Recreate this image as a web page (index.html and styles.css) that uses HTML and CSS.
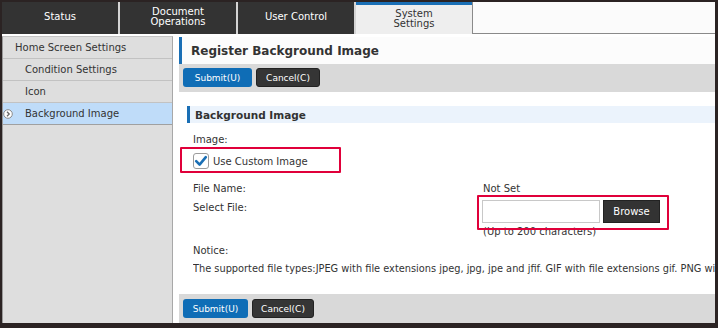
FILE: index.html
```html
<!DOCTYPE html>
<html lang="en">
<head>
    <meta charset="UTF-8">
    <title>Register Background Image</title>
    <link rel="stylesheet" href="styles.css">
</head>
<body>
<div class="frame">
    <div class="tabs">
        <div class="tab">Status</div>
        <div class="tab">Document<br>Operations</div>
        <div class="tab">User Control</div>
        <div class="tab active">System<br>Settings</div>
        <div class="tab-fill"></div>
    </div>

    <div class="main">
        <!-- Menu lateral -->
        <div class="sidebar">
            <div class="side-item top">Home Screen Settings</div>
            <div class="side-item">Condition Settings</div>
            <div class="side-item">Icon</div>
            <div class="side-item current">
                <svg class="side-icon" width="10" height="10" viewBox="0 0 10 10">
                    <circle cx="5" cy="5" r="4.3" fill="#fff" stroke="#8a8a8a" stroke-width="1"/>
                    <path d="M4 2.8 L6.2 5 L4 7.2" fill="none" stroke="#666" stroke-width="1.3"/>
                </svg>
                Background Image
            </div>
        </div>

        <div class="content">
            <div class="page-title">Register Background Image</div>
            <div class="toolbar">
                <button class="btn btn-submit top-submit">Submit(U)</button>
                <button class="btn btn-cancel top-cancel">Cancel(C)</button>
            </div>

            <div class="section-title">Background Image</div>

            <div class="form">
                <div class="line first">Image:</div>
                <label class="check-row mark mark-check">
                    <span class="checkbox">
                        <svg width="16" height="16" viewBox="0 0 16 16">
                            <path d="M3.2 8.2 L6.6 11.6 L12.8 4.2" fill="none" stroke="#1a6fb5" stroke-width="2.6" stroke-linecap="round" stroke-linejoin="round"/>
                        </svg>
                    </span>
                    Use Custom Image
                </label>

                <div class="file-grid">
                    <div class="line">File Name:</div>
                    <div class="line">Not Set</div>
                    <div class="line">Select File:</div>
                    <div>
                        <div class="file-input mark mark-file">
                            <input type="text" class="path">
                            <button class="browse">Browse</button>
                        </div>
                        <div class="hint">(Up to 200 characters)</div>
                    </div>
                </div>

                <div class="line notice-label">Notice:</div>
                <div class="line notice">The supported file types:JPEG with file extensions jpeg, jpg, jpe and jfif. GIF with file extensions gif. PNG with file extensions png.</div>
            </div>

            <div class="toolbar bottom">
                <button class="btn btn-submit">Submit(U)</button>
                <button class="btn btn-cancel">Cancel(C)</button>
            </div>
        </div>
    </div>
</div>
</body>
</html>
```

FILE: styles.css
```css
body {
    margin: 0;
    font-family: "DejaVu Sans", Verdana, sans-serif;
    font-size: 10px;
    color: #333;
    background: #fff;
}

.frame {
    width: 718px;
    height: 328px;
    box-sizing: border-box;
    border: solid #2b2323;
    border-width: 2px 3px 5px 2px;
    display: flex;
    flex-direction: column;
    overflow: hidden;
}

/* Pestañas */
.tabs {
    display: flex;
    height: 32px;
    flex-shrink: 0;
    background: #d4d4d4;
}

.tab {
    width: 116px;
    margin-right: 2px;
    background: #333;
    color: #fff;
    display: flex;
    align-items: center;
    justify-content: center;
    text-align: center;
    line-height: 10px;
    padding-bottom: 2px;
    box-sizing: border-box;
}

.tab.active {
    background: #eee;
    color: #333;
    border-top: 3px solid #1a6fb5;
    margin-right: 0;
}

.tab-fill {
    flex: 1;
    background: #fbfbfb;
    border-left: 1px solid #8a8a8a;
    border-bottom: 1px solid #8a8a8a;
}

.main {
    flex: 1;
    display: flex;
    min-height: 0;
}

/* Menu lateral */
.sidebar {
    width: 171px;
    box-sizing: border-box;
    margin-top: 2px;
    background: #dedede;
    border-top: 1px solid #c4c4c4;
    border-left: 1px solid #9a9a9a;
    border-right: 1px solid #a8a8a8;
}

.side-item {
    height: 21px;
    border-bottom: 1px solid #c2c2c2;
    padding-left: 22px;
    display: flex;
    align-items: center;
}

.side-item.top {
    padding-left: 12px;
}

.side-item.current {
    padding-left: 0;
    background: #bfdcf9;
    border-bottom-color: #a0a0a0;
}

.side-icon {
    margin-right: 12px;
}

.content {
    flex: 1;
    min-width: 0;
    display: flex;
    flex-direction: column;
    padding: 3px 0 0 6px;
    background: #fff;
}

.page-title {
    height: 27px;
    flex-shrink: 0;
    border-left: 3px solid #1a6fb5;
    background: #fcfcfc;
    font-weight: bold;
    font-size: 12px;
    padding-left: 9px;
    display: flex;
    align-items: center;
}

.toolbar {
    height: 28px;
    flex-shrink: 0;
    box-sizing: border-box;
    background: #d9d9d9;
    padding: 4px;
    display: flex;
    gap: 4px;
}

.toolbar.bottom {
    margin-top: auto;
    height: 29px;
    padding-top: 5px;
}

.btn {
    height: 19px;
    border-radius: 3px;
    color: #fff;
    font-family: inherit;
    font-size: 9px;
    padding: 0;
    border: none;
    cursor: pointer;
}

.btn-submit {
    background: #0f6db6;
    width: 65px;
}

.btn-cancel {
    background: #353535;
    border: 1px solid #222;
    width: 62px;
}

.top-submit {
    width: 69px;
}

.top-cancel {
    width: 64px;
}

.section-title {
    margin: 14px 0 0 8px;
    height: 17px;
    flex-shrink: 0;
    border-left: 3px solid #1a6fb5;
    background: #ebf3fc;
    font-size: 10.5px;
    font-weight: bold;
    padding-left: 5px;
    display: flex;
    align-items: center;
}

.form {
    padding-left: 14px;
}

.line {
    line-height: 18px;
    white-space: nowrap;
}

.line.first {
    margin-top: 8px;
}

.check-row {
    margin-top: 3px;
    height: 18px;
    display: inline-flex;
    align-items: center;
    gap: 4px;
}

.checkbox {
    width: 16px;
    height: 16px;
    box-sizing: border-box;
    border: 1px solid #9c9c9c;
    border-radius: 3px;
    background: #fff;
    display: flex;
    align-items: center;
    justify-content: center;
}

.checkbox svg {
    flex-shrink: 0;
}

.file-grid {
    display: grid;
    grid-template-columns: 290px auto;
    margin-top: 9px;
    row-gap: 1px;
}

.file-input {
    display: inline-flex;
    vertical-align: top;
    gap: 3px;
    margin-top: 1px;
    margin-left: -1px;
}

.path {
    width: 118px;
    height: 23px;
    box-sizing: border-box;
    border: 1px solid #c8c8c8;
    margin: 0;
    padding: 0 4px;
}

.browse {
    width: 57px;
    height: 23px;
    background: #333;
    color: #fff;
    border: 1px solid #222;
    font-family: inherit;
    font-size: 10px;
    padding: 0;
}

.hint {
    line-height: 18px;
}

.notice-label {
    margin-top: 1px;
}

.notice {
    font-size: 9.8px;
    overflow: hidden;
}

/* Marcos rojos de señalamiento */
.mark {
    position: relative;
}

.mark::after {
    content: "";
    position: absolute;
    border: 2px solid #e0003a;
    border-radius: 1px;
    pointer-events: none;
}

.mark-check::after {
    left: -13px;
    top: -5px;
    right: -33px;
    bottom: -3px;
}

.mark-file::after {
    left: -5px;
    top: -5px;
    right: -9px;
    bottom: -7px;
}
```
